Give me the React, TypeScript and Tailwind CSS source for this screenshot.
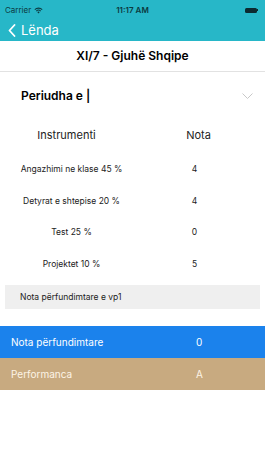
import React from "react";

const rows = [
  { name: "Angazhimi ne klase 45 %", v: "4" },
  { name: "Detyrat e shtepise 20 %", v: "4" },
  { name: "Test 25 %", v: "0" },
  { name: "Projektet 10 %", v: "5" },
];

export default function App() {
  return (
    <div className="w-[265px] h-[471px] bg-white overflow-hidden" style={{ fontFamily: "Inter, 'Liberation Sans', sans-serif" }}>
      <div className="bg-[#27b7c8]">
        <div className="h-[20px] relative flex items-center px-[5px]">
          <span className="text-[8px] text-[#0c3a40] leading-none">Carrier</span>
          <svg className="ml-[3px]" width="9" height="7" viewBox="0 0 12 9">
            <path d="M6 8.5 L4.3 6.6 A2.5 2.5 0 0 1 7.7 6.6 Z" fill="#0c3a40" />
            <path d="M2.6 4.9 A4.8 4.8 0 0 1 9.4 4.9 L8.5 5.8 A3.5 3.5 0 0 0 3.5 5.8 Z" fill="#0c3a40" />
            <path d="M0.6 2.9 A7.6 7.6 0 0 1 11.4 2.9 L10.4 3.9 A6.2 6.2 0 0 0 1.6 3.9 Z" fill="#0c3a40" />
          </svg>
          <span className="absolute left-0 right-0 text-center text-[8px] font-semibold text-[#0c3a40] leading-none">11:17 AM</span>
          <div className="ml-auto flex items-center mr-[2px]">
            <div className="w-[12px] h-[5px] rounded-[1.5px] bg-[#0c2a30]" />
            <div className="w-[1px] h-[2px] bg-[#0c2a30] ml-[0.5px]" />
          </div>
        </div>
        <div className="h-[21px] flex items-center pl-[8px]">
          <svg width="8" height="13" viewBox="0 0 8 13">
            <path d="M6.5 1 L1.5 6.5 L6.5 12" stroke="white" strokeWidth="1.8" fill="none" strokeLinecap="round" strokeLinejoin="round" />
          </svg>
          <span className="ml-[5px] text-[13px] text-white leading-none">Lënda</span>
        </div>
      </div>
      <div className="h-[31px] flex items-center justify-center border-b border-[#e2e2e2]">
        <span className="text-[12px] font-semibold text-black">XI/7 - Gjuhë Shqipe</span>
      </div>
      <div className="h-[48px] flex items-center pl-[21px] pr-[12px]">
        <span className="text-[12px] font-semibold text-black">Periudha e |</span>
        <svg className="ml-auto" width="11" height="6" viewBox="0 0 11 6">
          <path d="M0.5 0.5 L5.5 5.5 L10.5 0.5" stroke="#c8c8c8" strokeWidth="1" fill="none" />
        </svg>
      </div>
      <div className="h-[31px] flex items-center text-[11px] text-[#222]">
        <div className="w-[133px] text-center">Instrumenti</div>
        <div className="w-[131px] text-center">Nota</div>
      </div>
      <div className="mt-[3px]">
        {rows.map((r) => (
          <div key={r.name} className="h-[31.5px] flex items-center text-[8.5px] text-[#222]">
            <div className="w-[143px] text-center">{r.name}</div>
            <div className="w-[103px] text-center">{r.v}</div>
          </div>
        ))}
      </div>
      <div className="mt-[5px] mx-[5px] h-[24px] bg-[#efefef] flex items-center pl-[15px] text-[8.5px] text-[#222]">
        Nota përfundimtare e vp1
      </div>
      <div className="mt-[17px] h-[32px] bg-[#1b82ec] flex items-center text-[10px] text-white">
        <div className="pl-[11px] w-[196px]">Nota përfundimtare</div>
        <div>0</div>
      </div>
      <div className="h-[32px] bg-[#c8aa80] flex items-center text-[10px] text-[#fdf4e6]">
        <div className="pl-[11px] w-[196px]">Performanca</div>
        <div>A</div>
      </div>
    </div>
  );
}
